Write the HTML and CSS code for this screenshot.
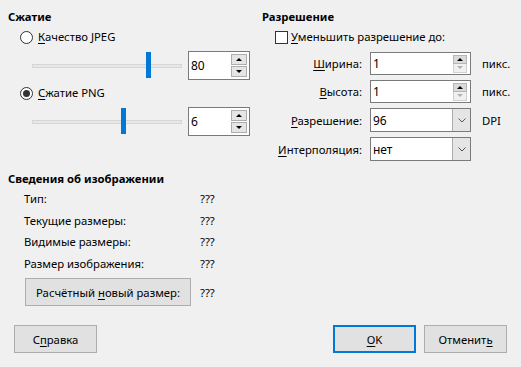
FILE: index.html
```html
<!DOCTYPE html>
<html lang="ru">
  <head>
    <meta charset="UTF-8" />
    <meta name="viewport" content="width=device-width, initial-scale=1.0" />
    <title>Сжатие изображения</title>
    <link rel="stylesheet" href="styles.css">
  </head>
  <body>
    <div class="dialog">
      <div class="top">
        <div class="compress">
          <h2 class="sectionTitle">Сжатие</h2>
          <div class="optRow">
            <span class="radio"></span>
            <span><u>К</u>ачество JPEG</span>
          </div>
          <div class="sliderRow">
            <div class="slider">
              <div class="track"></div>
              <div class="thumb" style="left: 114px"></div>
            </div>
            <div class="spin">
              <span>80</span>
              <div class="spinBtns">
                <span class="spinBtn"><i class="arrUp"></i></span>
                <span class="spinBtn"><i class="arrDown"></i></span>
              </div>
            </div>
          </div>
          <div class="optRow">
            <span class="radio checked"></span>
            <span><u>С</u>жатие PNG</span>
          </div>
          <div class="sliderRow">
            <div class="slider">
              <div class="track"></div>
              <div class="thumb" style="left: 89px"></div>
            </div>
            <div class="spin">
              <span>6</span>
              <div class="spinBtns">
                <span class="spinBtn"><i class="arrUp"></i></span>
                <span class="spinBtn"><i class="arrDown"></i></span>
              </div>
            </div>
          </div>
        </div>

        <div class="resolution">
          <h2 class="sectionTitle">Разрешение</h2>
          <div class="optRow">
            <span class="checkbox"></span>
            <span><u>У</u>меньшить разрешение до:</span>
          </div>
          <div class="fields">
            <label class="fieldLabel"><u>Ш</u>ирина:</label>
            <div class="field">
              <span>1</span>
              <div class="fieldBtns">
                <span class="fieldBtn"><i class="arrUp"></i></span>
                <span class="fieldBtn off"><i class="arrDown"></i></span>
              </div>
            </div>
            <span class="unit">пикс.</span>

            <label class="fieldLabel"><u>В</u>ысота:</label>
            <div class="field">
              <span>1</span>
              <div class="fieldBtns">
                <span class="fieldBtn"><i class="arrUp"></i></span>
                <span class="fieldBtn off"><i class="arrDown"></i></span>
              </div>
            </div>
            <span class="unit">пикс.</span>

            <label class="fieldLabel"><u>Р</u>азрешение:</label>
            <div class="combo">
              <span class="comboText">96</span>
              <span class="comboBtn">
                <svg width="8" height="5" viewBox="0 0 8 5"><polyline points="0.5,0.5 4,4 7.5,0.5" fill="none" stroke="#555" stroke-width="1"/></svg>
              </span>
            </div>
            <span class="unit">DPI</span>

            <label class="fieldLabel"><u>И</u>нтерполяция:</label>
            <div class="combo">
              <span class="comboText">нет</span>
              <span class="comboBtn">
                <svg width="8" height="5" viewBox="0 0 8 5"><polyline points="0.5,0.5 4,4 7.5,0.5" fill="none" stroke="#555" stroke-width="1"/></svg>
              </span>
            </div>
            <span class="unit"></span>
          </div>
        </div>
      </div>

      <div class="info">
        <h2 class="sectionTitle">Сведения об изображении</h2>
        <div class="infoGrid">
          <span>Тип:</span><span>???</span>
          <span>Текущие размеры:</span><span>???</span>
          <span>Видимые размеры:</span><span>???</span>
          <span>Размер изображения:</span><span>???</span>
        </div>
        <div class="calcRow">
          <button class="btn calcBtn">Расчётный <u>н</u>овый размер:</button>
          <span>???</span>
        </div>
      </div>

      <div class="footer">
        <button class="btn helpBtn">С<u>п</u>равка</button>
        <button class="btn okBtn"><u>О</u>K</button>
        <button class="btn">Отменит<u>ь</u></button>
      </div>
    </div>
  </body>
</html>
```

FILE: styles.css
```css
* {
  padding: 0;
  margin: 0;
  box-sizing: border-box;
}
body {
  background: #f0f0f0;
  font-family: "Noto Sans", "Open Sans", sans-serif;
  font-size: 11.3px;
  color: #000;
}
u {
  text-decoration: underline;
  text-underline-offset: 2px;
}
.dialog {
  width: 521px;
  height: 367px;
  padding: 9px 14px 14px 8px;
  display: flex;
  flex-direction: column;
}
.top {
  display: grid;
  grid-template-columns: 254px 1fr;
}
.sectionTitle {
  font-size: 11.3px;
  font-weight: 700;
  line-height: 16px;
}
.optRow {
  display: flex;
  align-items: center;
  height: 16px;
  margin-top: 4px;
  padding-left: 12px;
  line-height: 16px;
}
.radio {
  width: 13px;
  height: 13px;
  border: 1px solid #333;
  border-radius: 50%;
  background: #fff;
  margin-right: 5px;
  display: flex;
  align-items: center;
  justify-content: center;
}
.radio.checked::after {
  content: "";
  width: 7px;
  height: 7px;
  border-radius: 50%;
  background: #333;
}
.checkbox {
  width: 13px;
  height: 13px;
  border: 1px solid #333;
  background: #fff;
  margin: 0 3px 0 1px;
}

/* sliders */
.sliderRow {
  display: flex;
  align-items: center;
  margin-top: 6px;
  margin-bottom: 5px;
}
.slider {
  position: relative;
  width: 150px;
  height: 29px;
  margin-left: 24px;
  margin-right: 6px;
  display: flex;
  align-items: center;
}
.track {
  width: 100%;
  height: 4px;
  background: #e7e7e7;
  border: 1px solid #d6d6d6;
}
.thumb {
  position: absolute;
  top: 1px;
  width: 5px;
  height: 26px;
  background: #0078d7;
}
.spin {
  width: 62px;
  height: 29px;
  border: 1px solid #7a7a7a;
  background: #fff;
  display: flex;
  align-items: center;
  justify-content: space-between;
  padding-left: 2px;
  font-size: 12px;
}
.spinBtns {
  display: flex;
  flex-direction: column;
  gap: 1px;
  margin-right: 2px;
}
.spinBtn {
  width: 16px;
  height: 11px;
  background: #e5e5e5;
  border: 1px solid #adadad;
  display: flex;
  align-items: center;
  justify-content: center;
}
.arrUp {
  width: 0;
  height: 0;
  border-left: 3px solid transparent;
  border-right: 3px solid transparent;
  border-bottom: 3px solid #000;
}
.arrDown {
  width: 0;
  height: 0;
  border-left: 3px solid transparent;
  border-right: 3px solid transparent;
  border-top: 3px solid #000;
}

/* resolution */
.fields {
  display: grid;
  grid-template-columns: 100px 101px auto;
  column-gap: 8px;
  row-gap: 5px;
  align-items: center;
  margin-top: 7px;
}
.fieldLabel {
  text-align: right;
}
.unit {
  padding-left: 3px;
}
.field,
.combo {
  height: 23px;
  border: 1px solid #7a7a7a;
  background: #fff;
  display: flex;
  align-items: center;
  font-size: 12px;
}
.field {
  justify-content: space-between;
  padding-left: 2px;
}
.fieldBtns {
  display: flex;
  flex-direction: column;
  margin-right: 3px;
}
.fieldBtn {
  width: 14px;
  height: 9px;
  background: #dadada;
  border: 1px solid #b5b5b5;
  display: flex;
  align-items: center;
  justify-content: center;
}
.fieldBtn.off {
  background: #f0f0f0;
  border-color: #d0d0d0;
  border-top: none;
}
.fieldBtn.off .arrDown {
  border-top-color: #b0b0b0;
}
.combo {
  height: 24px;
}
.comboText {
  flex: 1;
  padding-left: 2px;
}
.comboBtn {
  width: 18px;
  height: 100%;
  background: #e5e5e5;
  border-left: 1px solid #adadad;
  display: flex;
  align-items: center;
  justify-content: center;
}

/* info */
.info {
  margin-top: 10px;
}
.infoGrid {
  display: grid;
  grid-template-columns: 176px auto;
  grid-auto-rows: 21.5px;
  align-items: center;
  padding-left: 16px;
  margin-top: 1px;
}
.calcRow {
  display: flex;
  align-items: center;
  margin-top: 4px;
  padding-left: 17px;
}
.btn {
  height: 28px;
  width: 83px;
  background: #e1e1e1;
  border: 1px solid #adadad;
  font-family: inherit;
  font-size: 11.3px;
  color: #000;
}
.calcBtn {
  width: 166px;
  margin-right: 9px;
}

/* footer */
.footer {
  margin-top: auto;
  display: flex;
}
.helpBtn {
  margin-left: 6px;
}
.okBtn {
  margin-left: auto;
  margin-right: 8px;
  border: 2px solid #0078d7;
}
```
